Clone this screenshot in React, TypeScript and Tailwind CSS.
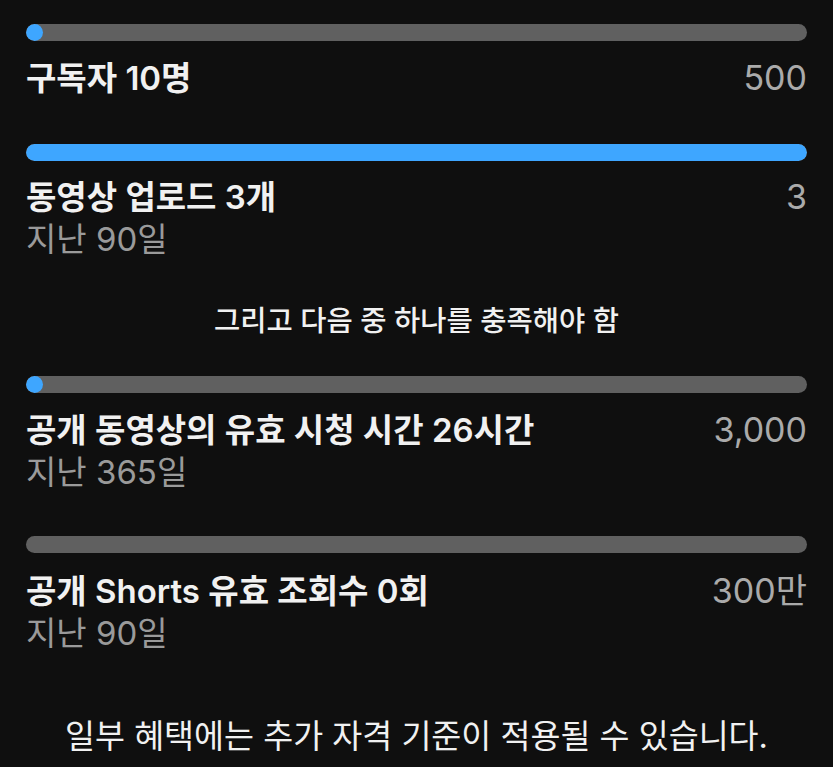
import React from 'react'

type Goal = {
  title: string
  target: string
  period?: string
  progress: number
}

const font = { fontFamily: 'Inter, "Noto Sans CJK KR", sans-serif' }

// Progress track with a blue fill; an empty-ish fill still shows as a dot
const Bar = ({ progress, className }: { progress: number; className?: string }) => (
  <div className={`h-[17px] w-full rounded-full bg-[#606060] overflow-hidden ${className ?? ''}`}>
    {progress > 0 && (
      <div
        className="h-full rounded-full bg-[#3ea6ff] min-w-[17px]"
        style={{ width: `${progress}%` }}
      />
    )}
  </div>
)

const GoalBlock = ({ goal, barTop, titleTop }: { goal: Goal; barTop: string; titleTop: string }) => (
  <div className={barTop}>
    <Bar progress={goal.progress} />
    <div className={`${titleTop} flex items-start justify-between`}>
      <div>
        <div className="text-[33px] leading-[42px] font-semibold text-[#f1f1f1]">
          {goal.title}
        </div>
        {goal.period && (
          <div className="text-[33px] leading-[42px] text-[#9a9a9a]">{goal.period}</div>
        )}
      </div>
      <div className="text-[34px] leading-[42px] text-[#aaaaaa]">{goal.target}</div>
    </div>
  </div>
)

export default function App() {
  return (
    <div className="min-h-screen w-full bg-[#0f0f0f] px-[26px] pt-[24px] pb-6" style={font}>
      <GoalBlock
        goal={{ title: '구독자 10명', target: '500', progress: 1 }}
        barTop="mt-0"
        titleTop="mt-[16px]"
      />
      <GoalBlock
        goal={{ title: '동영상 업로드 3개', target: '3', period: '지난 90일', progress: 100 }}
        barTop="mt-[45px]"
        titleTop="mt-[15px]"
      />

      <div className="mt-[41px] text-center text-[28.5px] leading-[40px] font-medium text-[#f1f1f1]">
        그리고 다음 중 하나를 충족해야 함
      </div>

      <GoalBlock
        goal={{ title: '공개 동영상의 유효 시청 시간 26시간', target: '3,000', period: '지난 365일', progress: 1 }}
        barTop="mt-[35px]"
        titleTop="mt-[16px]"
      />
      <GoalBlock
        goal={{ title: '공개 Shorts 유효 조회수 0회', target: '300만', period: '지난 90일', progress: 0 }}
        barTop="mt-[43px]"
        titleTop="mt-[17px]"
      />

      <div className="mt-[61px] text-center text-[32.6px] leading-[42px] text-[#f1f1f1]">
        일부 혜택에는 추가 자격 기준이 적용될 수 있습니다.
      </div>
    </div>
  )
}
